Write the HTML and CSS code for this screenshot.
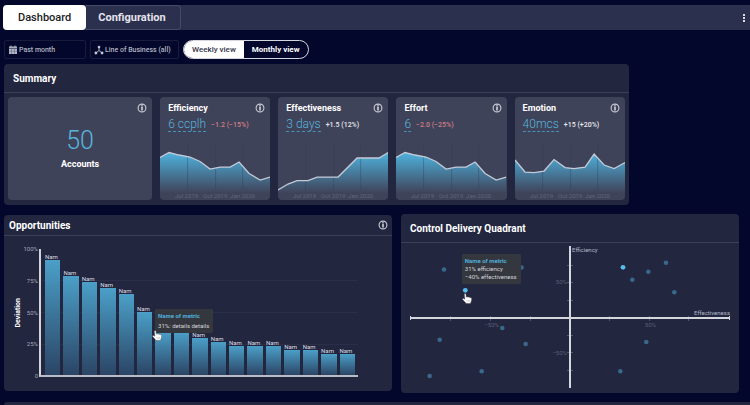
FILE: index.html
```
<!DOCTYPE html>
<html lang="en">
<head>
<meta charset="utf-8">
<title>Dashboard</title>
<link rel="stylesheet" href="styles.css">
</head>
<body>
<svg class="defs" aria-hidden="true">
  <defs>
    <linearGradient id="area" gradientUnits="userSpaceOnUse" x1="0" y1="9" x2="0" y2="50">
      <stop offset="0" stop-color="#4fb4e0"/>
      <stop offset="1" stop-color="#3f4359"/>
    </linearGradient>
    <symbol id="info" viewBox="0 0 10 10">
      <circle cx="5" cy="5" r="3.900" fill="none" stroke="#c9cbd6" stroke-width="1.100"/>
      <path d="M5 2.300v1.100M5 4.100v3.400" stroke="#e8e9ef" stroke-width="1.400"/>
    </symbol>
    <symbol id="hand" viewBox="0 0 10 11">
      <path d="M2.300 1.200c0-.9 1.600-.9 1.700 0l.3 3c.5-.5 1.300-.4 1.500 0 .4-.4 1.200-.3 1.400.2.5-.3 1.200-.1 1.300.4.700-.2 1.200.1 1.200.8 0 1.800-.4 3.300-1.300 4.800H4C3.200 9 1.700 8 .6 6.600c-.5-.8.4-1.500 1.100-1l1.100.7z" fill="#fff" stroke="#33363f" stroke-width=".4"/>
      <path d="M5 7v1.800M6.300 7v1.800M7.600 7v1.800" stroke="#999" stroke-width=".4"/>
    </symbol>
  </defs>
</svg>

<header class="topbar">
  <nav class="tabs">
    <a class="tab active" href="#">Dashboard</a>
    <a class="tab" href="#">Configuration</a>
  </nav>
  <button class="more" aria-label="More options">
    <svg viewBox="0 0 4 10"><path d="M1 1h2v2H1zM1 4h2v2H1zM1 7h2v2H1z" fill="#dcdde5"/></svg>
  </button>
</header>

<main>
  <div class="filters">
    <div class="filter period">
      <svg viewBox="0 0 10 10"><path d="M1 1.500h1.500V.5h1v1h3v-1h1v1H9V3H1zM1 3.600h8V9H1z" fill="#b4b6c3"/><path d="M1 3.300h8M1 6.200h8M3.500 4v5M6.500 4v5" stroke="#5d6074" stroke-width=".5"/></svg>
      <select aria-label="Period"><option>Past month</option></select>
    </div>
    <div class="filter business">
      <svg viewBox="0 0 10 10"><path d="M5 2.500V5.500L2 8M5 5.500 8 8" fill="none" stroke="#b4b6c3"/><circle cx="5" cy="2" r="1.300" fill="#c3c5d0"/><circle cx="1.900" cy="8" r="1.400" fill="#c3c5d0"/><circle cx="8.100" cy="8" r="1.400" fill="#c3c5d0"/></svg>
      <select aria-label="Line of business"><option>Line of Business (all)</option></select>
    </div>
    <div class="toggle">
      <button class="on" aria-pressed="true">Weekly view</button>
      <button aria-pressed="false">Monthly view</button>
    </div>
  </div>

  <section class="panel summary">
    <h2 class="head">Summary</h2>
    <div class="cards">
      <article class="card total">
        <svg class="info"><use href="#info"/></svg>
        <strong class="count">50</strong>
        <h3>Accounts</h3>
      </article>
      <article class="card">
        <div class="title"><h3>Efficiency</h3><svg class="info"><use href="#info"/></svg></div>
        <div class="figures"><a class="value" href="#">6 ccplh</a><span class="delta down">−1.2 (−15%)</span></div>
        <svg class="spark" viewBox="0 0 110 57">
          <path class="area" d="M0 14.500 9 9.500 19 12 30 14 40 18.500 50 26 60 24H70L79 19 89 30.500 100 37 110 34V50H0z"/>
          <path class="rule" d="M27.500 0V47M55.500 0V47M82.500 0V47"/>
          <path class="line" d="M0 14.500 9 9.500 19 12 30 14 40 18.500 50 26 60 24H70L79 19 89 30.500 100 37 110 34"/>
          <text x="15" y="55">Jul 2019</text><text x="43" y="55">Oct 2019</text><text x="70" y="55">Jan 2020</text>
        </svg>
      </article>
      <article class="card">
        <div class="title"><h3>Effectiveness</h3><svg class="info"><use href="#info"/></svg></div>
        <div class="figures"><a class="value" href="#">3 days</a><span class="delta">+1.5 (12%)</span></div>
        <svg class="spark" viewBox="0 0 110 57">
          <path class="area" d="M0 47 10 41 19 37.500H30L39 34H60L79 15H101L110 9.500V50H0z"/>
          <path class="rule" d="M27.500 0V47M55.500 0V47M82.500 0V47"/>
          <path class="line" d="M0 47 10 41 19 37.500H30L39 34H60L79 15H101L110 9.500"/>
          <text x="15" y="55">Jul 2019</text><text x="43" y="55">Oct 2019</text><text x="70" y="55">Jan 2020</text>
        </svg>
      </article>
      <article class="card">
        <div class="title"><h3>Effort</h3><svg class="info"><use href="#info"/></svg></div>
        <div class="figures"><a class="value" href="#">6</a><span class="delta down">−2.0 (−25%)</span></div>
        <svg class="spark" viewBox="0 0 110 57">
          <path class="area" d="M0 14.500 9 9.500 19 12 30 14 40 18.500 50 26 60 24H70L79 19 89 30.500 100 37 110 34V50H0z"/>
          <path class="rule" d="M27.500 0V47M55.500 0V47M82.500 0V47"/>
          <path class="line" d="M0 14.500 9 9.500 19 12 30 14 40 18.500 50 26 60 24H70L79 19 89 30.500 100 37 110 34"/>
          <text x="15" y="55">Jul 2019</text><text x="43" y="55">Oct 2019</text><text x="70" y="55">Jan 2020</text>
        </svg>
      </article>
      <article class="card">
        <div class="title"><h3>Emotion</h3><svg class="info"><use href="#info"/></svg></div>
        <div class="figures"><a class="value" href="#">40mcs</a><span class="delta">+15 (+20%)</span></div>
        <svg class="spark" viewBox="0 0 110 57">
          <path class="area" d="M0 17 10 29 19 29.500 29 28 39 16.500 50 24.500 59 25.500 70 24 79 11 89 22 99 25.500 110 19.500V50H0z"/>
          <path class="rule" d="M27.500 0V47M55.500 0V47M82.500 0V47"/>
          <path class="line" d="M0 17 10 29 19 29.500 29 28 39 16.500 50 24.500 59 25.500 70 24 79 11 89 22 99 25.500 110 19.500"/>
          <text x="15" y="55">Jul 2019</text><text x="43" y="55">Oct 2019</text><text x="70" y="55">Jan 2020</text>
        </svg>
      </article>
    </div>
  </section>

  <div class="lower">
    <section class="panel opportunities">
      <div class="head"><h2>Opportunities</h2><svg class="info"><use href="#info"/></svg></div>
      <div class="barchart">
        <span class="axis-name">Deviation</span>
        <div class="scale"><span>100%</span><span>75%</span><span>50%</span><span>25%</span><span>0</span></div>
        <div class="plot">
          <div class="bar" style="height:91.500%"><span>Nam</span></div>
          <div class="bar" style="height:79%"><span>Nam</span></div>
          <div class="bar" style="height:74%"><span>Nam</span></div>
          <div class="bar" style="height:69%"><span>Nam</span></div>
          <div class="bar" style="height:64%"><span>Nam</span></div>
          <div class="bar" style="height:50%"><span>Nam</span></div>
          <div class="bar" style="height:34%"></div>
          <div class="bar" style="height:34%"></div>
          <div class="bar" style="height:29.500%"><span>Nam</span></div>
          <div class="bar" style="height:26%"><span>Nam</span></div>
          <div class="bar" style="height:23%"><span>Nam</span></div>
          <div class="bar" style="height:23%"><span>Nam</span></div>
          <div class="bar" style="height:23%"><span>Nam</span></div>
          <div class="bar" style="height:20%"><span>Nam</span></div>
          <div class="bar" style="height:20%"><span>Nam</span></div>
          <div class="bar" style="height:17%"><span>Nam</span></div>
          <div class="bar" style="height:17%"><span>Nam</span></div>
          <div class="tip bar-tip"><b>Name of metric</b><span>31%: details details</span></div>
          <svg class="hand bar-hand"><use href="#hand"/></svg>
        </div>
      </div>
    </section>

    <section class="panel quadrant">
      <h2 class="head">Control Delivery Quadrant</h2>
      <div class="canvas">
        <svg class="scatter" viewBox="0 0 338 150">
          <path class="tick" d="M49.500 73v5M89.500 73v5M129.500 73v5M208.500 73v5M248.500 73v5M287.500 73v5M166 22.500h6M166 39.500h6M166 57.500h6M166 92.500h6M166 109.500h6M166 127.500h6"/>
          <path class="axis" d="M9 75H329M169 3V145"/>
          <path class="cap" d="M9.500 73v4M328.500 73v4"/>
          <g class="dots">
            <circle cx="43" cy="26.500" r="2.300"/><circle cx="120.500" cy="24.500" r="2.300"/>
            <circle cx="101.300" cy="85" r="2.300"/><circle cx="38.700" cy="96.700" r="2.300"/>
            <circle cx="124.700" cy="101" r="2.300"/><circle cx="28.700" cy="133" r="2.300"/>
            <circle cx="80.700" cy="128.300" r="2.300"/><circle cx="231.300" cy="36.700" r="2.300"/>
            <circle cx="247.300" cy="28.700" r="2.300"/><circle cx="265" cy="19.700" r="2.300"/>
            <circle cx="273.300" cy="49.300" r="2.300"/><circle cx="245.300" cy="99" r="2.300"/>
            <circle cx="219.300" cy="128.300" r="2.300"/>
          </g>
          <g class="dots bright"><circle cx="64.300" cy="47.300" r="2.400"/><circle cx="222" cy="24.300" r="2.400"/></g>
          <text class="name" x="171" y="9">Efficiency</text>
          <text class="name end" x="329" y="72">Effectiveness</text>
          <text class="end" x="166" y="41">50%</text>
          <text class="end" x="166" y="112">−50%</text>
          <text class="end" x="98" y="84">−50%</text>
          <text class="end" x="255" y="84">50%</text>
        </svg>
        <div class="tip dot-tip"><b>Name of metric</b><span>31% efficiency<br>−40% effectiveness</span></div>
        <svg class="hand dot-hand"><use href="#hand"/></svg>
      </div>
    </section>
  </div>
</main>
<div class="next-panel"></div>
</body>
</html>
```
FILE: styles.css
```
* { box-sizing: border-box; }

body {
  margin: 0;
  min-height: 100vh;
  display: flex;
  flex-direction: column;
  background: #02072b;
  color: #fff;
  font-family: Roboto, "Liberation Sans", sans-serif;
  font-size: 8px;
}

h2, h3 { margin: 0; font-weight: 700; }
h2, .head { font-size: 10px; }
h3 { font-size: 9px; line-height: 12px; }
a { color: inherit; text-decoration: none; }
button, select { font: inherit; color: inherit; background: none; border: 0; padding: 0; margin: 0; }
svg { display: block; }
.defs { position: absolute; width: 0; height: 0; }
.info { width: 10px; height: 10px; flex: none; }

.topbar {
  display: flex;
  justify-content: space-between;
  align-items: center;
  margin: 5px 0 0 3px;
  height: 25px;
  background: #2c304f;
  border-radius: 4px 0 0 4px;
}
.tabs { display: flex; height: 25px; }
.tab {
  display: flex;
  align-items: center;
  padding: 0 14px 0 12px;
  border: 1px solid #464a66;
  border-left: 0;
  border-radius: 0 4px 4px 0;
  font-size: 11px;
  font-weight: 700;
  color: #e3e4ec;
}
.tab.active {
  padding: 0 15px;
  border: 0;
  border-radius: 4px;
  background: #fff;
  color: #1c1d26;
  font-weight: 500;
}
.more { padding-right: 4px; }
.more svg { width: 4px; height: 10px; }

main { padding: 10px 11px 0 4px; }

.filters { display: flex; gap: 4px; height: 19px; }
.filter {
  display: flex;
  align-items: center;
  gap: 1px;
  padding: 0 3px;
  border: 1px solid #191d3b;
  border-radius: 2px;
  color: #b4b6c3;
  font-size: 7px;
}
.filter svg { width: 10px; height: 10px; flex: none; }
.filter select { appearance: none; font-weight: 500; }
.period { width: 82px; }
.business { width: 89px; }
.toggle {
  display: flex;
  border: 1px solid #d5d6de;
  border-radius: 10px;
  overflow: hidden;
}
.toggle button { padding: 0 8px; font-weight: 700; }
.toggle .on { background: #fff; color: #33364a; font-weight: 500; }

.panel { background: #22263f; border-radius: 4px; }
.head { display: flex; align-items: center; border-bottom: 1px solid #3c4058; }

.summary { width: 85%; margin-top: 5px; }
.summary .head { height: 29px; padding: 0 9px; }
.cards {
  display: grid;
  grid-template-columns: 144fr repeat(4, 110fr);
  gap: 8px;
  padding: 4px 4px 5px;
}
.card {
  display: flex;
  flex-direction: column;
  min-width: 0;
  background: #3f4359;
  border-radius: 4px;
  overflow: hidden;
}
.total { align-items: center; padding: 6px 5px; }
.total .info { align-self: flex-end; }
.count { margin-top: 14px; font-size: 25px; line-height: 28px; font-weight: 300; color: #58b4de; }
.total h3 { margin-top: 3px; }
.title { display: flex; justify-content: space-between; padding: 5px 5px 0 8px; }
.title .info { margin-top: 1px; }
.figures { display: flex; align-items: center; gap: 5px; padding: 3px 8px 0; height: 18px; }
.value {
  font-size: 12px;
  line-height: 14px;
  font-weight: 300;
  color: #58b4de;
  border-bottom: 1px dashed #4792b6;
}
.delta { font-size: 7px; font-weight: 500; color: #e6e7ec; }
.delta.down { color: #cf7f86; }
.spark { width: 100%; margin-top: 11px; }
.spark text { font-size: 6px; fill: #61657a; }
.area { fill: url(#area); }
.rule { stroke: #353950; stroke-opacity: .35; }
.line { fill: none; stroke: #c4cad8; stroke-width: 1.3; }

.lower {
  display: grid;
  grid-template-columns: 388fr 338fr;
  gap: 9px;
  align-items: start;
  margin-top: 9px;
}
.opportunities { margin-top: 1px; }
.opportunities .head { justify-content: space-between; height: 21px; padding: 0 4px 0 5px; }

.barchart { display: flex; height: 155px; padding: 13px 34px 14px 10px; }
.axis-name {
  writing-mode: vertical-rl;
  transform: rotate(180deg);
  align-self: center;
  font-size: 7px;
  line-height: 8px;
  font-weight: 700;
}
.scale {
  display: flex;
  flex-direction: column;
  justify-content: space-between;
  align-items: flex-end;
  width: 16px;
  margin: -4px 1px -3px 0;
  font-size: 6px;
  line-height: 8px;
  color: #a5a8b8;
}
.plot {
  position: relative;
  flex: 1;
  display: flex;
  align-items: flex-end;
  gap: 3px;
  padding: 0 3px 0 4px;
  border-left: 2px solid #d2d4dc;
  border-bottom: 2px solid #b9bbc7;
  background: repeating-linear-gradient(to bottom, transparent 0 31px, #2a2e47 31px 32px);
}
.bar {
  position: relative;
  flex: 1;
  background: linear-gradient(#4b9fc8, #2b4565);
}
.bar span {
  position: absolute;
  left: 0;
  bottom: 100%;
  font-size: 6px;
  line-height: 6px;
  color: #dcdee6;
}

.tip {
  position: absolute;
  display: flex;
  flex-direction: column;
  padding: 3px 4px 3px 3px;
  background: #34373e;
  border-radius: 1px;
  font-size: 6px;
  line-height: 8px;
  color: #d3d4d9;
  white-space: nowrap;
}
.tip b { color: #4fb0dc; }
.bar-tip { left: 36%; top: 60px; gap: 2px; }
.hand { position: absolute; width: 10px; height: 11px; }
.bar-hand { left: 35%; top: 81px; }

.quadrant .head { height: 29px; padding: 0 9px; }
.canvas { position: relative; }
.scatter { width: 100%; }
.scatter text { font-size: 6px; fill: #5c6076; }
.scatter .name { fill: #b4b7c5; }
.scatter .end { text-anchor: end; }
.axis { stroke: #d5d7df; stroke-width: 2; }
.cap { stroke: #d5d7df; }
.tick { stroke: #50567a; }
.dots { fill: #38688b; }
.dots.bright { fill: #56bdec; }
.dot-tip { left: 18%; top: 7%; }
.dot-hand { left: 18%; top: 33%; }

.next-panel { flex: 1; min-height: 3px; margin: 9px 0 0 4px; background: #22263f; border-radius: 4px 0 0 0; }
```
